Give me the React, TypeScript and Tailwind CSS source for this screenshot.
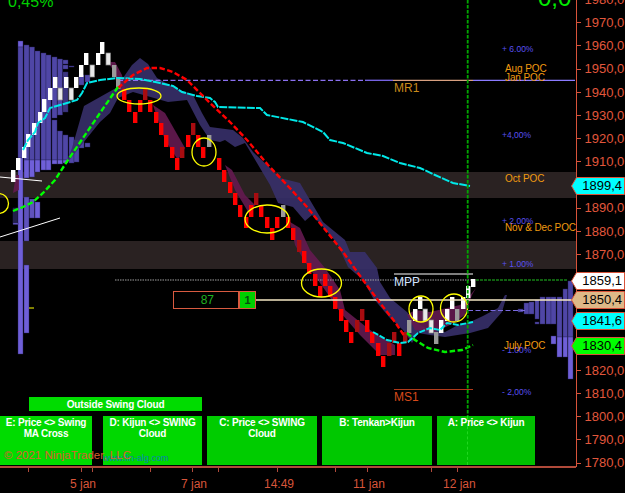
const FONT = "'Liberation Sans', Arial, sans-serif";

type Bar = [number, number, number];
const white: Bar[] = [[11,170,182],[16,158,170],[22,147,158],[26,134,147],[32,123,135],[38,112,123],[42,99,112],[48,88,100],[53,77,88],[64,77,88],[74,77,88],[79,65,77],[84,53,65],[96,53,65],[100,42,54],[413,309,321],[418,297,309],[439,320,333],[445,309,321],[450,297,309],[461,297,309],[466,286,298],[471,279,287]];
const paleGrey: Bar[] = [[58,88,100],[69,88,100],[90,65,77],[106,53,65],[423,309,321],[429,320,333]];
const grey: Bar[] = [[112,65,77],[116,77,89],[207,135,147],[281,205,217],[407,320,333],[434,332,344],[455,309,321]];
const red: Bar[] = [[122,89,100],[127,100,112],[133,112,123],[138,100,112],[148,100,112],[154,112,123],[159,123,135],[164,135,147],[170,147,158],[175,158,170],[186,135,147],[196,135,147],[201,147,158],[217,158,170],[222,170,182],[228,182,193],[233,193,205],[238,205,217],[244,217,228],[249,205,217],[259,205,217],[265,217,228],[270,228,240],[275,217,228],[286,217,228],[291,228,240],[302,251,263],[307,263,274],[313,274,286],[318,286,297],[323,274,286],[328,286,297],[333,297,309],[339,309,321],[344,320,332],[349,332,343],[365,320,332],[370,332,343],[376,343,356],[381,356,367],[397,343,356]];
const dimRed: Bar[] = [[143,89,100],[180,147,158],[191,123,135],[254,193,205],[297,240,252],[355,320,332],[360,309,321],[387,343,356],[392,332,343],[403,332,343]];

// x, width, top, bottom, tone
const D = "#4f46a6";
const L = "#6f5fd8";
const profile: [number, number, number, number, string][] = [
  [18,5,41,47,L],[18,5,47,158,D],[18,5,158,354,L],
  [24,5,45,160,D],[24,5,160,178,L],[24,5,197,241,"#5f52bc"],[24,5,265,333,L],
  [29.5,5,47,160,D],[29.5,5,160,177,L],[29.5,5,199,218,"#5f52bc"],
  [35,5,51,160,D],[35,5,160,172,L],[35,5,202,218,L],
  [41,5,53,160,D],[41,5,160,170,L],
  [46,5,55,160,D],[46,5,160,170,L],
  [52,5,57,118,D],[52,5,120,160,D],[52,5,160,164,L],
  [57.5,5,59,115,D],[57.5,5,131,160,D],[57.5,5,160,164,L],
  [63,5,60,64,D],[63,5,65,69,D],[63,5,72,112,"#3c3580"],[63,5,135,160,D],[63,5,160,163,L],
  [69,5,66,67,D],[69,5,137,163,D],
  [74,5,140,162,D],[79,5,75,85,D],[79,5,140,148,D],[85,5,75,82,D],[85,5,143,147,D],
  [13,4.5,208,223,"#221f4a"],[13,5,223,224.5,L],
  [518,5,309,312,D],[524,5,303,314,D],[529,5,302,314,D],[535,4,300,319,D],[535,4,322,324,D],
  [540,5,297,324,D],[546,5,297,324,D],[551,5,297,324,D],[551,5,336,344,L],
  [557,5,297,337,D],[557,5,337,357,L],[563,4.5,289,337,D],[563,4.5,337,357,L],
  [568,5,281,337,D],[568,5,337,379,L],
];

const cloud = "66,163 72,148 84,106 116,88 132,65 140,58 148,64 157,78 175,88 193,95 202,113 210,127 233,130 243,138 253,152 267,165 280,178 300,183 307,195 323,222 345,240 350,252 365,252 377,268 380,282 390,298 407,312 415,322 428,329 445,332 458,325 470,322 483,316 498,308 505,295 507,295 502,312 488,328 470,333 445,337 430,335 418,333 412,343 403,330 390,318 373,298 363,280 348,267 337,243 323,227 312,215 305,221 293,207 278,203 270,185 257,163 245,143 235,147 225,140 220,142 210,140 200,125 187,100 168,102 133,92 118,98 110,113 100,122 83,143 72,157";
const maroon = [
  "108,62 115,62 122,75 126,92 118,88 113,70",
  "153,105 165,113 185,148 178,160 165,140",
  "225,165 232,170 245,195 255,205 250,215 235,190",
  "290,222 300,228 310,250 325,268 340,290 345,310 370,330 395,345 395,355 380,355 360,335 340,312 325,290 305,262 295,245",
  "407,315 415,330 435,332 450,325 465,315 472,295 476,288 468,298 460,305 430,312 415,310",
  "13,193 16,175 19,175 19,190",
];
const swing = "118,88 133,75 147,68 160,68 173,72 187,80 200,93 210,103 230,122 247,140 268,165 287,185 307,207 323,227 343,252 363,280 380,303 395,322 405,337";
const kijunA = "13,211 23,207 33,202 43,193 55,180 66,163 83,138 100,113 118,87";
const kijunB = "407,333 415,340 428,348 445,352 462,350 473,345";
const tenkanA = "23,150 28,140 35,132 38,123 45,118 50,108 60,105 77,100 82,93 87,83 100,80 117,78 140,79 160,83 173,86 182,92 197,96 210,98 215,102 218,107 260,108 267,115 303,122 323,132 330,140 343,143 367,153 383,156 400,163 420,168 435,175 453,183 470,186";
const tenkanB = "373,332 387,340 400,343 408,342 418,333 430,328 440,330 447,323 458,325 473,322";

const ellipses: [number, number, number, number][] = [[139,96,22,8],[204,152,12,14],[-1,203.5,9.5,10],[267,219,22,14],[321.5,283,20,14],[421,309,12,13],[454,308,13.5,14]];

const pct: [string, number][] = [["+ 6.00%",52],["+4,00%",138],["+ 2,00%",224],["+ 1.00%",267],["- 1.00%",353],["- 2,00%",395]];
const poc: [string, number, number][] = [["Aug POC",505,72],["Jan POC",505,81],["Oct POC",505,182],["Nov & Dec POC:",505,231],["July POC",504,349]];

// the rows at 1900 and 1860-1830 sit behind the price tags, so they stay blank
const prices = ["1980,0","1970,0","1960,0","1950,0","1940,0","1930,0","1920,0","1910,0","","1890,0","1880,0","1870,0","","","","","1820,0","1810,0","1800,0","1790,0","1780,0"];

const tags = [
  { label: "1899,4", pos: "top-[177px]", fill: "#00ffff" },
  { label: "1859,1", pos: "top-[272px]", fill: "#ffffff" },
  { label: "1850,4", pos: "top-[291px]", fill: "#deb887" },
  { label: "1841,6", pos: "top-[312px]", fill: "#00ffff" },
  { label: "1830,4", pos: "top-[337px]", fill: "#00ff00" },
];

function Bars({ items, fill, stroke }: { items: Bar[]; fill: string; stroke?: string }) {
  return (
    <>
      {items.map(([x, a, b]) => (
        <rect key={x + "-" + a} x={x} y={a} width={4.4} height={b - a} fill={fill} stroke={stroke} strokeWidth={stroke ? 0.7 : 0} />
      ))}
    </>
  );
}

function Chart() {
  return (
    <svg className="absolute inset-0 pointer-events-none" width={576} height={466} viewBox="0 0 576 466">
      <rect x={0} y={172} width={576} height={26} fill="#2a2222" />
      <rect x={0} y={241} width={576} height={28} fill="#2a2222" />

      {profile.map(([x, w, a, b, c], i) => (
        <rect key={i} x={x} y={a} width={w} height={b - a} fill={c} stroke="#2a2560" strokeWidth={0.4} />
      ))}

      <polygon points={cloud} fill="#37306a" opacity={0.9} />
      {maroon.map((p) => <polygon key={p} points={p} fill="#641a50" opacity={0.9} />)}

      <line x1={118} y1={80.3} x2={365} y2={80.3} stroke="#8a70f0" strokeWidth={1.3} strokeDasharray="5 2.5" />
      <line x1={365} y1={80.3} x2={393} y2={80.3} stroke="#7c68ee" strokeWidth={1.3} />
      <line x1={393} y1={80.3} x2={473} y2={80.3} stroke="#d8a080" strokeWidth={1.3} />
      <line x1={473} y1={80.3} x2={575} y2={80.3} stroke="#8b7bff" strokeWidth={1.3} />
      <line x1={394} y1={389.5} x2={473} y2={389.5} stroke="#b03a1a" strokeWidth={1.1} />
      <line x1={394} y1={274} x2={473} y2={274} stroke="#ffffff" strokeWidth={1} />
      <line x1={115} y1={280} x2={472} y2={280} stroke="#a0a0a0" strokeWidth={1} strokeDasharray="1.5 1" />
      <line x1={472} y1={280} x2={568} y2={280} stroke="#20c020" strokeWidth={1.1} strokeDasharray="3 1" />
      <line x1={468} y1={310.5} x2={525} y2={310.5} stroke="#7a6ae0" strokeWidth={1.2} strokeDasharray="5 2.5" />

      <Bars items={dimRed} fill="#a80c10" />
      <Bars items={red} fill="#ff0000" />
      <Bars items={grey} fill="#9a9a9a" />
      <Bars items={paleGrey} fill="#e8e8e8" stroke="#8a8a8a" />
      <Bars items={white} fill="#ffffff" />

      <line x1={256} y1={300} x2={576} y2={300} stroke="#f6e8c4" strokeWidth={1.5} />
      <line x1={0} y1={177} x2={42} y2={181} stroke="#ffffff" strokeWidth={1} />
      <line x1={0} y1={237} x2={60} y2={218} stroke="#ffffff" strokeWidth={1} />
      <line x1={29} y1={308} x2={34} y2={308} stroke="#ffff00" strokeWidth={1} />

      <polyline points={tenkanA} fill="none" stroke="#00e8e8" strokeWidth={2} strokeDasharray="8 1.2" />
      <polyline points={tenkanB} fill="none" stroke="#00e8e8" strokeWidth={2} strokeDasharray="6 1.5" />
      <polyline points={swing} fill="none" stroke="#ff0000" strokeWidth={2.4} strokeDasharray="5.5 2.5" />
      <polyline points={kijunA} fill="none" stroke="#00ff00" strokeWidth={2.4} strokeDasharray="5.5 2.5" />
      <polyline points={kijunB} fill="none" stroke="#00ee00" strokeWidth={2.4} strokeDasharray="5.5 2.5" />

      {ellipses.map(([cx, cy, rx, ry]) => (
        <ellipse key={cx} cx={cx} cy={cy} rx={rx} ry={ry} fill="none" stroke="#ffff00" strokeWidth={1.3} />
      ))}

      <line x1={467.7} y1={0} x2={467.7} y2={416} stroke="#00a800" strokeWidth={1.8} strokeDasharray="3.5 1.5" />

      <g fontFamily={FONT}>
        {pct.map(([t, y]) => <text key={t} x={502} y={y} fontSize={8.5} fill="#5a50f0">{t}</text>)}
        {poc.map(([t, x, y]) => <text key={t} x={x} y={y} fontSize={10} letterSpacing={-0.1} fill="#f09a10">{t}</text>)}
        <text x={394} y={92} fontSize={12} fill="#c88a1a">MR1</text>
        <text x={394} y={401} fontSize={12} fill="#d84a1a">MS1</text>
        <text x={394} y={285.5} fontSize={12} fill="#d0e4ff">MPP</text>
      </g>
    </svg>
  );
}

const xTicks: [string, string][] = [
  ["28", "left-[28px]"], ["81", "left-[81px]"], ["92", "left-[92px]"], ["150", "left-[150px]"], ["192", "left-[192px]"],
  ["218", "left-[218px]"], ["277", "left-[277px]"], ["335", "left-[335px]"], ["367", "left-[367px]"], ["431", "left-[431px]"], ["457", "left-[457px]"],
];

const btn = "h-[49px] shrink-0 text-center text-white font-bold text-[10px] tracking-[-0.2px] leading-[11px] pt-[1px]";

export default function App() {
  return (
    <div className="relative flex w-[625px] h-[493px] overflow-hidden bg-black" style={{ fontFamily: FONT }}>
      {/* plot column */}
      <div className="relative flex flex-col justify-end w-[576px] h-full shrink-0">
        <Chart />

        <div className="absolute left-[8px] top-[-6px] text-[16px] leading-[16px] text-[#00d000]">0,45%</div>
        <div className="absolute left-[538px] top-[-12px] text-[24px] leading-[20px] text-[#00ee00]">0,0</div>

        <div className="absolute left-[173px] top-[291px] flex h-[18px]">
          <div className="flex w-[66px] items-center justify-end border border-[#d85a40] pr-[24px] text-[12px] text-[#20b020]">87</div>
          <div className="flex w-[17px] items-center justify-center border border-[#d85a40] bg-[#00d000] text-[11px] font-bold text-[#064a10]">1</div>
        </div>

        {/* signal row */}
        <div className="ml-[29px] flex h-[14px] w-[173px] items-center justify-center bg-[#00dc00] text-[10px] tracking-[-0.15px] font-bold text-white">Outside Swing Cloud</div>
        <div className="mt-[5px] flex">
          <div className={`${btn} w-[92px] bg-[#00dc00]`}>E: Price &lt;&gt; Swing<br />MA Cross</div>
          <div className={`${btn} ml-[11px] w-[99px] bg-[#00d800]`}>D: Kijun &lt;&gt; SWING<br />Cloud</div>
          <div className={`${btn} ml-[5px] w-[110px] bg-[#00cc00]`}>C: Price &lt;&gt; SWING<br />Cloud</div>
          <div className={`${btn} ml-[5px] w-[110px] bg-[#00c800]`}>B: Tenkan&gt;Kijun</div>
          <div className={`${btn} relative ml-[5px] w-[98px] bg-[#00c000]`}>
            A: Price &lt;&gt; Kijun
            <div className="absolute left-[30px] top-0 h-full border-l border-dashed border-[#20d820]" />
          </div>
        </div>

        <div className="absolute left-[103px] top-[453px] text-[9px] leading-[10px] text-[#0a80b0]">www.fin-alg.com</div>
        <div className="absolute left-[4px] top-[448px] text-[11.5px] leading-[14px] text-[#d8602f]">© 2021 NinjaTrader, LLC</div>

        {/* time axis */}
        <div className="relative h-[27px] mt-[1px] border-t-2 border-[#b04a3a] text-[12px] leading-[14px] text-[#d8553a]">
          {xTicks.map(([k, pos]) => <div key={k} className={`absolute top-0 h-[4px] w-px bg-[#b04a3a] ${pos}`} />)}
          <div className="absolute left-[70px] top-[9px]">5 jan</div>
          <div className="absolute left-[181px] top-[9px]">7 jan</div>
          <div className="absolute left-[264px] top-[9px]">14:49</div>
          <div className="absolute left-[353px] top-[9px]">11 jan</div>
          <div className="absolute left-[443px] top-[9px]">12 jan</div>
        </div>
      </div>

      {/* price axis */}
      <div className="h-[467px] w-[49px] border-l border-[#d8533a]">
        <div className="-mt-[12px] flex flex-col">
          {prices.map((p, i) => (
            <div key={i} className="flex h-[23.18px] items-center text-[13px] text-[#e2573c]">
              <div className="h-px w-[4px] bg-[#d8533a]" />
              <span className="ml-[3.5px]">{p}</span>
            </div>
          ))}
        </div>
      </div>

      {tags.map((t) => (
        <div key={t.label} className={`absolute left-[571px] flex h-[18px] w-[54px] items-center justify-end pr-[3px] text-[13px] text-black ${t.pos}`}>
          <svg className="absolute inset-0" width={54} height={18} viewBox="0 0 54 18">
            <polygon points="0.5,9 5.5,0.5 53.5,0.5 53.5,17.5 5.5,17.5" fill={t.fill} stroke="#d8533a" />
          </svg>
          <span className="relative">{t.label}</span>
        </div>
      ))}
    </div>
  );
}
